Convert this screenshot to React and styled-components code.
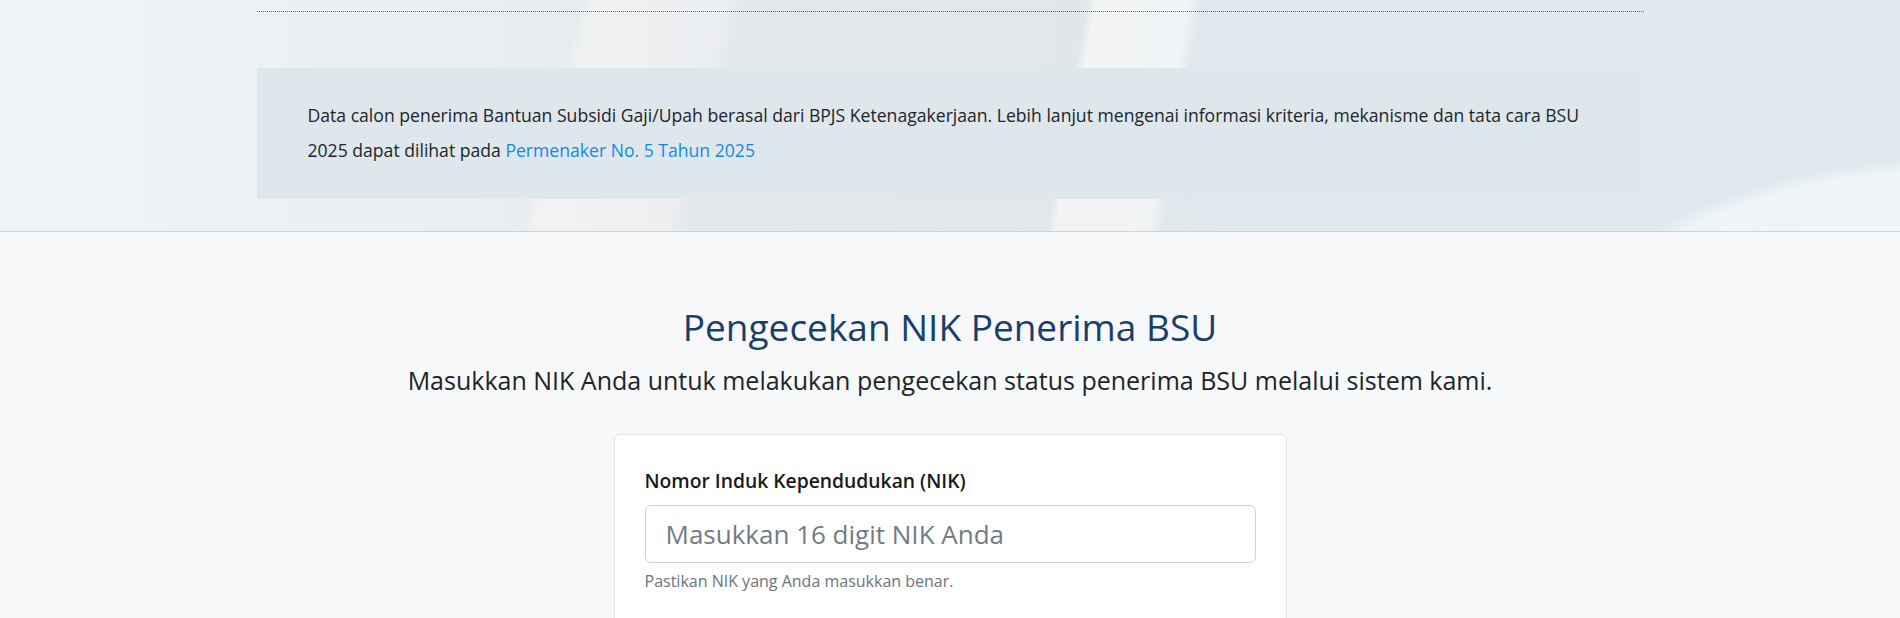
import React from 'react'
import styled, { createGlobalStyle } from 'styled-components'

const GlobalStyle = createGlobalStyle`
    body {
        margin: 0;
        font-family: 'Open Sans', 'Noto Sans', sans-serif;
        color: #212529;
        background: #f7f8fa;
    }
`

const Hero = styled.header`
    height: 231px;
    border-bottom: 1px solid #cfd1d3;
    background:
        radial-gradient(ellipse 560px 300px at 1960px 380px, rgba(255, 255, 255, 0.75) 0%, rgba(255, 255, 255, 0.5) 70%, rgba(255, 255, 255, 0) 74%),
        linear-gradient(100deg, transparent 0 1070px, rgba(255, 255, 255, 0.55) 1080px 1170px, transparent 1185px),
        linear-gradient(105deg, transparent 0 560px, rgba(255, 255, 255, 0.3) 575px 700px, transparent 720px),
        linear-gradient(90deg, #f1f4f6 0%, #eceff1 22%, #e4e7ea 40%, #e2e6e9 57%, #dfe9ee 68%, #deeaef 100%);
`

const Container = styled.div`
    width: 1387px;
    margin: 0 auto;
`

const TopRule = styled.div`
    height: 11px;
    border-bottom: 1px dotted #4f6b86;
`

const InfoBox = styled.div`
    margin-top: 56px;
    padding: 30px 51px 31px;
    background: #dee7ec;
    font-size: 17.6px;
    line-height: 35px;
    color: #212529;
`

const InfoLink = styled.a`
    color: #1487f0;
    text-decoration: none;
`

const CheckSection = styled.section`
    padding-top: 72px;
    display: flex;
    flex-direction: column;
    align-items: center;
`

const Title = styled.h1`
    margin: 0;
    font-size: 37px;
    font-weight: 400;
    line-height: 46px;
    color: #1b3f6b;
`

const Lead = styled.p`
    margin: 13px 0 0;
    font-size: 25px;
    line-height: 35px;
    color: #212529;
`

const Card = styled.div`
    box-sizing: border-box;
    width: 673px;
    margin-top: 36px;
    padding: 32px 30px 40px;
    background: #fff;
    border: 1px solid #e3e5e8;
    border-radius: 6px;
    box-shadow: 0 1px 3px rgba(0, 0, 0, 0.04);
`

const Label = styled.label`
    display: block;
    font-size: 19.3px;
    font-weight: 600;
    line-height: 28px;
    color: #1a1a1a;
`

const Input = styled.input`
    box-sizing: border-box;
    display: block;
    width: 100%;
    height: 58px;
    margin-top: 10px;
    padding: 0 20px;
    font-family: inherit;
    font-size: 26px;
    color: #212529;
    background: #fff;
    border: 1px solid #cfd3d8;
    border-radius: 6px;
    outline: none;

    &::placeholder {
        color: #737b83;
    }
`

const Help = styled.div`
    margin-top: 6px;
    font-size: 16px;
    line-height: 24px;
    color: #6c757d;
`

export default function App() {
    return (
        <>
            <GlobalStyle />
            <Hero>
                <Container>
                    <TopRule />
                    <InfoBox>
                        Data calon penerima Bantuan Subsidi Gaji/Upah berasal dari BPJS Ketenagakerjaan. Lebih lanjut
                        mengenai informasi kriteria, mekanisme dan tata cara BSU 2025 dapat dilihat pada{' '}
                        <InfoLink href="#">Permenaker No. 5 Tahun 2025</InfoLink>
                    </InfoBox>
                </Container>
            </Hero>
            <CheckSection>
                <Title>Pengecekan NIK Penerima BSU</Title>
                <Lead>Masukkan NIK Anda untuk melakukan pengecekan status penerima BSU melalui sistem kami.</Lead>
                <Card>
                    <Label htmlFor="nik">Nomor Induk Kependudukan (NIK)</Label>
                    <Input id="nik" type="text" placeholder="Masukkan 16 digit NIK Anda" />
                    <Help>Pastikan NIK yang Anda masukkan benar.</Help>
                </Card>
            </CheckSection>
        </>
    )
}
